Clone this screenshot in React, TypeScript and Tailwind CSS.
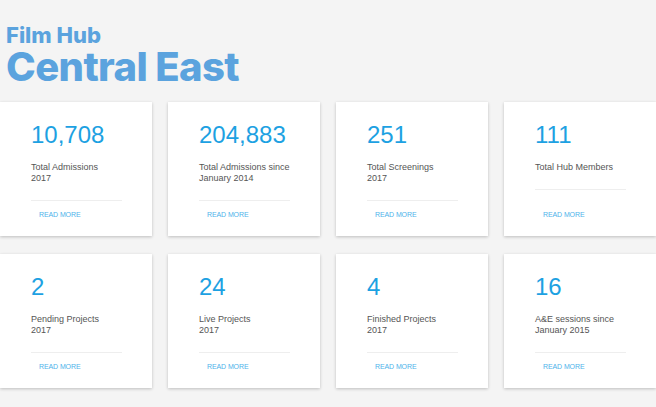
const STATS = [
  { value: "10,708", label: ["Total Admissions", "2017"] },
  { value: "204,883", label: ["Total Admissions since", "January 2014"] },
  { value: "251", label: ["Total Screenings", "2017"] },
  { value: "111", label: ["Total Hub Members"] },
  { value: "2", label: ["Pending Projects", "2017"] },
  { value: "24", label: ["Live Projects", "2017"] },
  { value: "4", label: ["Finished Projects", "2017"] },
  { value: "16", label: ["A&E sessions since", "January 2015"] },
];

function StatCard({ value, label }: { value: string; label: string[] }) {
  return (
    <div className="flex h-[134px] flex-col bg-white pl-[31px] pr-[30px] pt-[19px] shadow-[0_1px_3px_rgba(0,0,0,0.22)]">
      <div className="text-[24px] font-light leading-[28px] text-[#1da1e2]">{value}</div>
      <div className="mt-[13px] border-b border-[#eeeeee] pb-[16px] text-[9px] leading-[11px] text-[#555555]">
        {label.map((line) => (
          <div key={line}>{line}</div>
        ))}
      </div>
      <div className="mt-auto pb-[17px] pl-[8px] text-[7px] leading-[8px] tracking-[-0.1px] text-[#4eb2ea]">
        READ MORE
      </div>
    </div>
  );
}

export default function App() {
  return (
    <div className="min-h-[407px] w-[656px] overflow-hidden bg-[#f4f4f4] font-['Liberation_Sans',Arial,sans-serif]">
      {/* Logo */}
      <header className="pl-[6px] pt-[24px] font-['Inter',sans-serif] font-extrabold text-[#5ba3de]">
        <div className="text-[22px] leading-[22px] tracking-normal">Film Hub</div>
        <div className="mt-[1px] text-[40px] leading-[40px] tracking-[-0.015em]">Central East</div>
      </header>

      {/* Stats */}
      <main className="mt-[15px] grid grid-cols-4 gap-x-[16px] gap-y-[18px]">
        {STATS.map((s) => (
          <StatCard key={s.value} value={s.value} label={s.label} />
        ))}
      </main>
    </div>
  );
}
